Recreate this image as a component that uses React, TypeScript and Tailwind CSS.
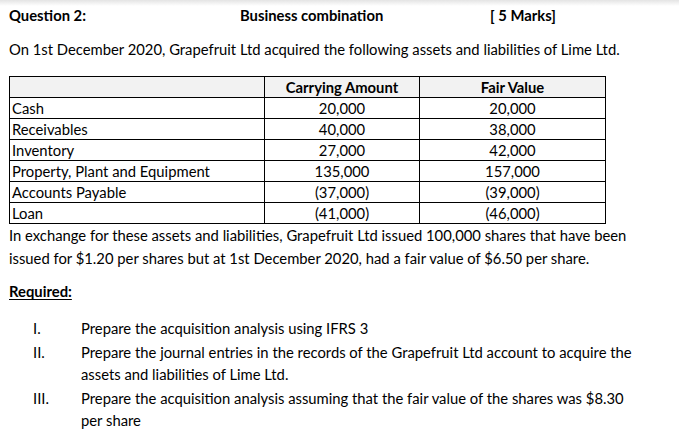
const rows = [
  { label: 'Cash', carrying: '20,000', fair: '20,000' },
  { label: 'Receivables', carrying: '40,000', fair: '38,000' },
  { label: 'Inventory', carrying: '27,000', fair: '42,000' },
  { label: 'Property, Plant and Equipment', carrying: '135,000', fair: '157,000' },
  { label: 'Accounts Payable', carrying: '(37,000)', fair: '(39,000)' },
  { label: 'Loan', carrying: '(41,000)', fair: '(46,000)' },
];

const tasks = [
  { num: 'I.', text: 'Prepare the acquisition analysis using IFRS 3' },
  {
    num: 'II.',
    text: 'Prepare the journal entries in the records of the Grapefruit Ltd account to acquire the assets and liabilities of Lime Ltd.',
  },
  {
    num: 'III.',
    text: 'Prepare the acquisition analysis assuming that the fair value of the shares was $8.30 per share',
  },
];

export default function App() {
  return (
    <div className="relative h-[435px] w-[679px] overflow-hidden bg-white pl-[9px] font-['Lato','Open_Sans',sans-serif] text-[14.8px] text-black">
      {/* page edge shadow */}
      <div className="absolute inset-x-0 top-0 h-[6px] bg-gradient-to-b from-[#e4e4e4] to-white" />

      <div className="relative mt-[3px] flex font-bold leading-[24px]">
        <span className="w-[231px]">Question 2:</span>
        <span className="w-[250px]">Business combination</span>
        <span>[ 5 Marks]</span>
      </div>

      <p className="mt-[10px] leading-[24px]">
        On 1st December 2020, Grapefruit Ltd acquired the following assets and liabilities of Lime Ltd.
      </p>

      <table className="mt-[15px] w-[597px] table-fixed border-collapse">
        <colgroup>
          <col className="w-[255px]" />
          <col className="w-[155px]" />
          <col />
        </colgroup>
        <thead>
          <tr className="h-[21px] bg-[#f2f2f2] font-bold leading-[19px]">
            <th className="border border-black p-0" />
            <th className="border border-black p-0 text-center">Carrying Amount</th>
            <th className="border border-black p-0 text-center">Fair Value</th>
          </tr>
        </thead>
        <tbody>
          {rows.map((row) => (
            <tr key={row.label} className="h-[21px] leading-[19px]">
              <td className="border border-black py-0 pl-[2px]">{row.label}</td>
              <td className="border border-black p-0 text-center">{row.carrying}</td>
              <td className="border border-black p-0 text-center">{row.fair}</td>
            </tr>
          ))}
        </tbody>
      </table>

      <p className="w-[640px] leading-[23px]">
        In exchange for these assets and liabilities, Grapefruit Ltd issued 100,000 shares that have been
        issued for $1.20 per shares but at 1st December 2020, had a fair value of $6.50 per share.
      </p>

      <p className="mt-[10px] font-bold leading-[23px] underline underline-offset-2">Required:</p>

      <ol className="mt-[14px] flex flex-col gap-[2px]">
        {tasks.map((task) => (
          <li key={task.num} className="flex leading-[22px]">
            <span className="w-[72px] shrink-0 pl-[24px]">{task.num}</span>
            <span className="w-[560px]">{task.text}</span>
          </li>
        ))}
      </ol>
    </div>
  );
}
